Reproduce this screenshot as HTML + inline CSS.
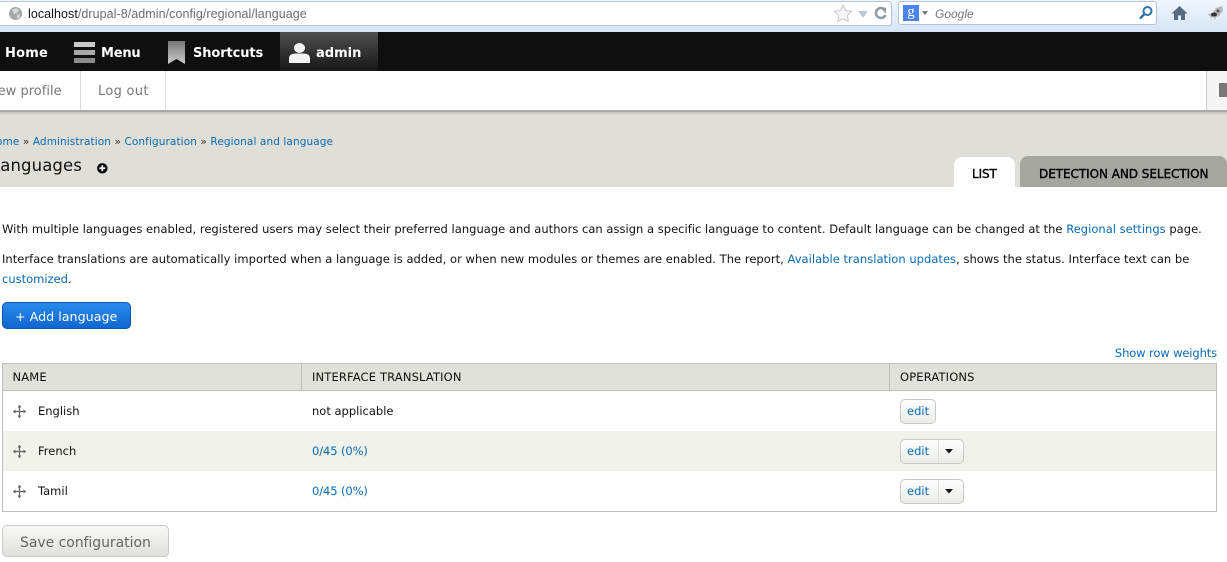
<!DOCTYPE html>
<html><head><meta charset="utf-8"><style>
html,body{margin:0;padding:0;width:1227px;height:562px;overflow:hidden;background:#fff}
body{position:relative;font-family:"DejaVu Sans","Liberation Sans",sans-serif;font-size:11.5px;color:#111}
.a{position:absolute;white-space:nowrap;line-height:16px}
.r{position:absolute}
.l{color:#0a6ab5}
.b{font-weight:bold;color:#fff;font-size:13px}
.th{font-size:11.5px;color:#111;letter-spacing:.15px}
.btn{position:absolute;box-sizing:border-box;border:1px solid #c8c8c4;border-radius:5px;background:linear-gradient(#fefefe,#ebebe8);height:25px}
</style></head><body>
<div class="r" style="left:0;top:0;width:1227px;height:32px;background:linear-gradient(#f0f6fc,#d5e5f5)"></div>
<div class="r" style="left:-10px;top:1px;width:900px;height:23px;background:#fff;border:1px solid #b3c4d8;border-radius:3px"></div>
<div class="r" style="left:898px;top:1px;width:259px;height:24px;box-sizing:border-box;background:#fff;border:1px solid #b3c4d8;border-radius:3px"></div>
<svg class="r" style="left:8px;top:6px" width="15" height="15"><circle cx="7.500" cy="7.500" r="6.500" fill="#a5a8aa"/><path d="M4 4l4-2 3 2-2 3-3 1zM9 9l3-1-1 4-2 1z" fill="#d8dadc"/></svg>
<div class="a" style="left:28px;top:6px;font-family:'Liberation Sans',sans-serif;font-size:12.500px;letter-spacing:.06px;color:#6d6d6d"><span style="color:#111">localhost</span>/drupal-8/admin/config/regional/language</div>
<svg class="r" style="left:834px;top:4px" width="56" height="20"><path d="M9 1l2.600 5.500 6 .8-4.300 4.200 1 6-5.300-2.800-5.300 2.800 1-6L.4 7.300l6-.8z" fill="#f6f6f6" stroke="#c4c8cc"/><path d="M24 7h10l-5 7z" fill="#c0c9d2"/><path d="M50 5a5 5 0 1 0 1.500 6" fill="none" stroke="#8d99a5" stroke-width="2.500"/><path d="M46 3.500h6v6z" fill="#8d99a5"/></svg>
<div class="r" style="left:903px;top:5px;width:16px;height:16px;background:#4a82f0;color:#fff;font:15px/15px 'Liberation Serif',serif;text-align:center">g</div>
<svg class="r" style="left:922px;top:11px" width="7" height="5"><path d="M0 0h6l-3 4z" fill="#777"/></svg>
<div class="a" style="left:935px;top:6px;font-family:'Liberation Sans',sans-serif;font-style:italic;font-size:12px;color:#777">Google</div>
<svg class="r" style="left:1138px;top:5px" width="16" height="16"><circle cx="9.500" cy="6" r="4" fill="none" stroke="#2e72b0" stroke-width="2"/><path d="M6.500 9l-4.500 4.500" stroke="#2e72b0" stroke-width="2.500"/></svg>
<svg class="r" style="left:1171px;top:5px" width="17" height="17"><path d="M8.500 1L0.500 8.500h2.500V15h4v-4.500h3V15h4V8.500h2.500z" fill="#556c80"/></svg>
<svg class="r" style="left:1207px;top:5px" width="17" height="17"><path d="M1 9l5-1 3-5 6-2 1 5-4 5-3 1-1 3-1-3-3 1z" fill="#b5b8ba"/><ellipse cx="7" cy="9.500" rx="3" ry="2" fill="#333"/><circle cx="11" cy="6" r="1.500" fill="#555"/></svg>

<div class="r" style="left:0;top:32px;width:1227px;height:39px;background:#0f0f0f"></div>
<div class="r" style="left:280px;top:32px;width:98px;height:39px;background:linear-gradient(#4f4f4f,#171717)"></div>
<div class="a b" style="left:5px;top:46px;letter-spacing:.2px">Home</div>
<svg class="r" style="left:74px;top:42px" width="21" height="22"><rect width="21" height="5" y="0" fill="#c9c9c9"/><rect width="21" height="5" y="8" fill="#a9a9a9"/><rect width="21" height="5" y="16" fill="#8a8a8a"/></svg>
<div class="a b" style="left:101px;top:46px;letter-spacing:-.2px">Menu</div>
<svg class="r" style="left:168px;top:41px" width="17" height="23"><defs><linearGradient id="g" x1="0" y1="0" x2="0" y2="1"><stop offset="0" stop-color="#777"/><stop offset="1" stop-color="#ccc"/></linearGradient></defs><path d="M0 0h17v23l-8.500-5-8.500 5z" fill="url(#g)"/></svg>
<div class="a b" style="left:193px;top:46px;letter-spacing:-.1px">Shortcuts</div>
<svg class="r" style="left:289px;top:43px" width="21" height="20"><ellipse cx="10.500" cy="5" rx="5.500" ry="5" fill="#f2f2f2"/><path d="M0 20v-5q0-4 6-4.500h9q6 .5 6 4.500v5z" fill="#f2f2f2"/></svg>
<div class="a b" style="left:316px;top:46px">admin</div>

<div class="r" style="left:0;top:71px;width:1227px;height:39px;background:#fff;border-bottom:2px solid #a9a9a5"></div>
<div class="r" style="left:80px;top:71px;width:1px;height:39px;background:#dcdcdc"></div>
<div class="r" style="left:165px;top:71px;width:1px;height:39px;background:#dcdcdc"></div>
<div class="r" style="left:1206px;top:71px;width:21px;height:39px;box-sizing:border-box;background:#f5f5f5;border-left:1px solid #ccc"></div>
<div class="r" style="left:1219px;top:83px;width:8px;height:14px;background:#777"></div>
<div class="a" style="left:-6px;top:84px;font-size:13px;letter-spacing:.02px;color:#777">iew profile</div>
<div class="a" style="left:98px;top:84px;font-size:13px;letter-spacing:.3px;color:#777">Log out</div>

<div class="r" style="left:0;top:112px;width:1227px;height:75px;background:#dfded7"></div>
<div class="r" style="left:0;top:112px;width:1227px;height:3px;background:linear-gradient(#c0c0ba,#dfded7)"></div>
<div class="a" style="left:-12px;top:134px;font-size:10.500px;letter-spacing:.1px;color:#333"><span class="l">Home</span> » <span class="l">Administration</span> » <span class="l">Configuration</span> » <span class="l">Regional and language</span></div>
<div class="a" style="left:-9px;top:157px;font-size:16.500px;letter-spacing:.1px;color:#111;line-height:18px">Languages</div>
<svg class="r" style="left:97px;top:163px" width="11" height="11"><circle cx="5.300" cy="5.300" r="5.200" fill="#000"/><path d="M5.300 2.300v6M2.300 5.300h6" stroke="#fff" stroke-width="1.800"/></svg>
<div class="r" style="left:954px;top:157px;width:61px;height:30px;background:#fff;border-radius:8px 8px 0 0"></div>
<div class="a" style="left:972px;top:166px;font-size:12px;color:#000;-webkit-text-stroke:.4px #000;letter-spacing:-.1px">LIST</div>
<div class="r" style="left:1020px;top:156px;width:207px;height:31px;background:#a6a6a0;border-radius:8px 8px 0 0"></div>
<div class="a" style="left:1039px;top:166px;font-size:12px;color:#000;-webkit-text-stroke:.4px #000;letter-spacing:-.05px">DETECTION AND SELECTION</div>

<div class="a" style="left:2px;top:221px;letter-spacing:.02px">With multiple languages enabled, registered users may select their preferred language and authors can assign a specific language to content. Default language can be changed at the <span class="l">Regional settings</span> page.</div>
<div class="a" style="left:2px;top:251px;letter-spacing:.03px">Interface translations are automatically imported when a language is added, or when new modules or themes are enabled. The report, <span class="l">Available translation updates</span>, shows the status. Interface text can be</div>
<div class="a" style="left:2px;top:271px"><span class="l">customized</span>.</div>

<div class="r" style="left:2px;top:302px;width:129px;height:27px;box-sizing:border-box;background:linear-gradient(#2a8bea,#0f66d0);border:1px solid #0b55ad;border-radius:5px"></div>
<div class="a" style="left:15px;top:309px;font-size:12.700px;color:#fff">+ Add language</div>

<div class="a l" style="right:10px;top:345px;letter-spacing:-.12px">Show row weights</div>

<div class="r" style="left:2px;top:363px;width:1215px;height:149px;box-sizing:border-box;border:1px solid #bfbfba"></div>
<div class="r" style="left:3px;top:364px;width:1213px;height:26px;background:#e1e1dc"></div>
<div class="r" style="left:3px;top:390px;width:1213px;height:1px;background:#bfbfba"></div>
<div class="r" style="left:301px;top:364px;width:1px;height:26px;background:#bfbfba"></div>
<div class="r" style="left:889px;top:364px;width:1px;height:26px;background:#bfbfba"></div>
<div class="r" style="left:3px;top:431px;width:1213px;height:40px;background:#f2f2ed"></div>
<div class="a th" style="left:12.500px;top:369px">NAME</div>
<div class="a th" style="left:312px;top:369px">INTERFACE TRANSLATION</div>
<div class="a th" style="left:900px;top:369px">OPERATIONS</div>

<svg class="r" style="left:13px;top:405px" width="13" height="13"><path d="M6.500 0v13M0 6.500h13" stroke="#666" stroke-width="1.200"/><path d="M6.500 0l2 2.500h-4zM6.500 13l2-2.500h-4zM0 6.500l2.500-2v4zM13 6.500l-2.500-2v4z" fill="#666"/></svg>
<svg class="r" style="left:13px;top:445px" width="13" height="13"><path d="M6.500 0v13M0 6.500h13" stroke="#666" stroke-width="1.200"/><path d="M6.500 0l2 2.500h-4zM6.500 13l2-2.500h-4zM0 6.500l2.500-2v4zM13 6.500l-2.500-2v4z" fill="#666"/></svg>
<svg class="r" style="left:13px;top:485px" width="13" height="13"><path d="M6.500 0v13M0 6.500h13" stroke="#666" stroke-width="1.200"/><path d="M6.500 0l2 2.500h-4zM6.500 13l2-2.500h-4zM0 6.500l2.500-2v4zM13 6.500l-2.500-2v4z" fill="#666"/></svg>
<div class="a" style="left:38px;top:403px;color:#111">English</div>
<div class="a" style="left:38px;top:443px;color:#111">French</div>
<div class="a" style="left:38px;top:483px;color:#111">Tamil</div>
<div class="a" style="left:312px;top:403px;color:#111">not applicable</div>
<div class="a l" style="left:312px;top:443px;letter-spacing:-.1px">0/45 (0%)</div>
<div class="a l" style="left:312px;top:483px;letter-spacing:-.1px">0/45 (0%)</div>

<div class="btn" style="left:900px;top:399px;width:36px"></div>
<div class="a l" style="left:907px;top:403px">edit</div>
<div class="btn" style="left:900px;top:439px;width:64px"></div>
<div class="r" style="left:938px;top:440px;width:1px;height:23px;background:#ddd"></div>
<div class="a l" style="left:907px;top:443px">edit</div>
<svg class="r" style="left:945px;top:449px" width="9" height="5"><path d="M0 0h8l-4 4.500z" fill="#111"/></svg>
<div class="btn" style="left:900px;top:479px;width:64px"></div>
<div class="r" style="left:938px;top:480px;width:1px;height:23px;background:#ddd"></div>
<div class="a l" style="left:907px;top:483px">edit</div>
<svg class="r" style="left:945px;top:489px" width="9" height="5"><path d="M0 0h8l-4 4.500z" fill="#111"/></svg>

<div class="btn" style="left:2px;top:525px;width:167px;height:32px;background:linear-gradient(#f8f8f7,#e0e0de)"></div>
<div class="a" style="left:20px;top:535px;font-size:14px;letter-spacing:-.05px;color:#666">Save configuration</div>
</body></html>
